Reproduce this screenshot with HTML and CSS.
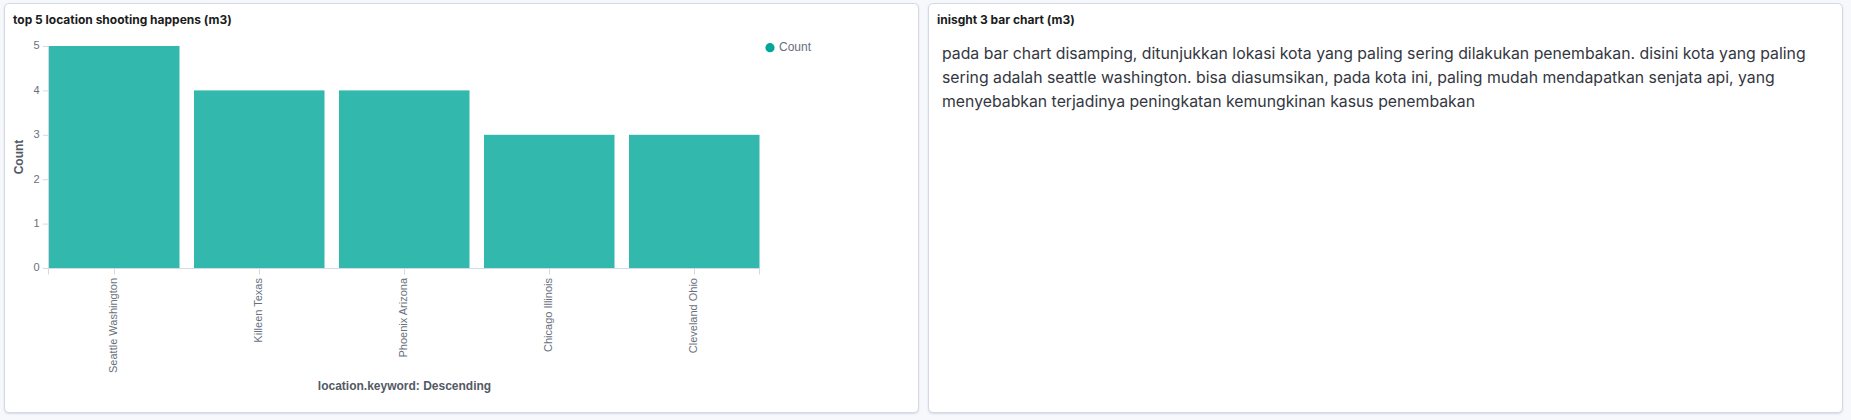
FILE: index.html
```html
<!DOCTYPE html>
<html>
<head>
<meta charset="utf-8">
<link rel="stylesheet" href="styles.css">
</head>
<body>
<div class="dashboard">
  <section class="panel">
    <header class="panel-title">top 5 location shooting happens (m3)</header>
    <div class="chart">
      <svg class="chart-svg" width="913" height="380" viewBox="0 0 913 380">
        <g class="bars">
          <rect x="44" y="16" width="130.5" height="222"/>
          <rect x="189" y="60.4" width="130.5" height="177.6"/>
          <rect x="334" y="60.4" width="130.5" height="177.6"/>
          <rect x="479" y="104.8" width="130.5" height="133.2"/>
          <rect x="624" y="104.8" width="130.5" height="133.2"/>
        </g>
        <g class="axis-lines">
          <line x1="43.5" y1="16" x2="43.5" y2="238.5"/>
          <line x1="38" y1="16.5" x2="43.5" y2="16.5"/>
          <line x1="38" y1="60.9" x2="43.5" y2="60.9"/>
          <line x1="38" y1="105.3" x2="43.5" y2="105.3"/>
          <line x1="38" y1="149.7" x2="43.5" y2="149.7"/>
          <line x1="38" y1="194.1" x2="43.5" y2="194.1"/>
          <line x1="38" y1="238.5" x2="43.5" y2="238.5"/>
          <line x1="43.5" y1="238.5" x2="755" y2="238.5"/>
          <line x1="43.5" y1="238.5" x2="43.5" y2="244.5"/>
          <line x1="109.5" y1="238.5" x2="109.5" y2="244.5"/>
          <line x1="254.5" y1="238.5" x2="254.5" y2="244.5"/>
          <line x1="399.5" y1="238.5" x2="399.5" y2="244.5"/>
          <line x1="544.5" y1="238.5" x2="544.5" y2="244.5"/>
          <line x1="689.5" y1="238.5" x2="689.5" y2="244.5"/>
          <line x1="754.5" y1="238.5" x2="754.5" y2="244.5"/>
        </g>
        <g class="y-labels">
          <text x="34.5" y="16.5">5</text>
          <text x="34.5" y="60.9">4</text>
          <text x="34.5" y="105.3">3</text>
          <text x="34.5" y="149.7">2</text>
          <text x="34.5" y="194.1">1</text>
          <text x="34.5" y="238.5">0</text>
        </g>
        <g class="x-labels">
          <text transform="translate(109.5 248) rotate(-90)">Seattle Washington</text>
          <text transform="translate(254.5 248) rotate(-90)">Killeen Texas</text>
          <text transform="translate(399.5 248) rotate(-90)">Phoenix Arizona</text>
          <text transform="translate(544.5 248) rotate(-90)">Chicago Illinois</text>
          <text transform="translate(689.5 248) rotate(-90)">Cleveland Ohio</text>
        </g>
        <text class="axis-title" transform="translate(14.5 127) rotate(-90)">Count</text>
        <text class="axis-title" x="399.5" y="357">location.keyword: Descending</text>
        <g class="legend">
          <circle cx="765" cy="17.7" r="4.6"/>
          <text x="774" y="17.7">Count</text>
        </g>
      </svg>
    </div>
  </section>
  <section class="panel">
    <header class="panel-title">inisght 3 bar chart (m3)</header>
    <div class="markdown">
      <p>pada bar chart disamping, ditunjukkan lokasi kota yang paling sering dilakukan penembakan. disini kota yang paling sering adalah seattle washington. bisa diasumsikan, pada kota ini, paling mudah mendapatkan senjata api, yang menyebabkan terjadinya peningkatan kemungkinan kasus penembakan</p>
    </div>
  </section>
</div>
</body>
</html>
```

FILE: styles.css
```css
html, body {
  margin: 0;
  padding: 0;
}
body {
  background: #f7f8fc;
  font-family: Inter, "Liberation Sans", sans-serif;
  width: 1851px;
  height: 420px;
  overflow: hidden;
}
.dashboard {
  display: flex;
  gap: 9px;
  padding: 3px 8px 0 4px;
}
.panel {
  box-sizing: border-box;
  width: 915px;
  height: 410px;
  background: #ffffff;
  border: 1px solid #d3dae6;
  border-radius: 5px;
  box-shadow: 0 1px 2px rgba(152, 162, 179, 0.35);
  display: flex;
  flex-direction: column;
  overflow: hidden;
}
.panel-title {
  height: 26px;
  box-sizing: border-box;
  padding: 8px 8px 0 8px;
  font-size: 12px;
  line-height: 16px;
  font-weight: 700;
  color: #1a1c21;
}
.chart {
  flex: 1;
}
.chart-svg {
  display: block;
}
.bars rect {
  fill: #33b8ae;
}
.axis-lines line {
  stroke: #d3dae6;
  stroke-width: 1;
}
.y-labels text {
  font-family: "Liberation Sans", Arial, sans-serif;
  font-size: 11px;
  fill: #69707d;
  text-anchor: end;
  dominant-baseline: middle;
}
.x-labels text {
  font-family: "Liberation Sans", Arial, sans-serif;
  font-size: 11px;
  fill: #69707d;
  text-anchor: end;
  dominant-baseline: middle;
}
.axis-title {
  font-family: "Liberation Sans", Arial, sans-serif;
  font-size: 12px;
  font-weight: 700;
  fill: #535966;
  text-anchor: middle;
  dominant-baseline: middle;
}
.legend circle {
  fill: #00a69b;
}
.legend text {
  font-family: "Liberation Sans", Arial, sans-serif;
  font-size: 12px;
  fill: #69707d;
  dominant-baseline: middle;
}
.markdown {
  padding: 12px 7px 0 13px;
}
.markdown p {
  margin: 0;
  font-size: 15.8px;
  line-height: 24px;
  color: #343741;
}
```
